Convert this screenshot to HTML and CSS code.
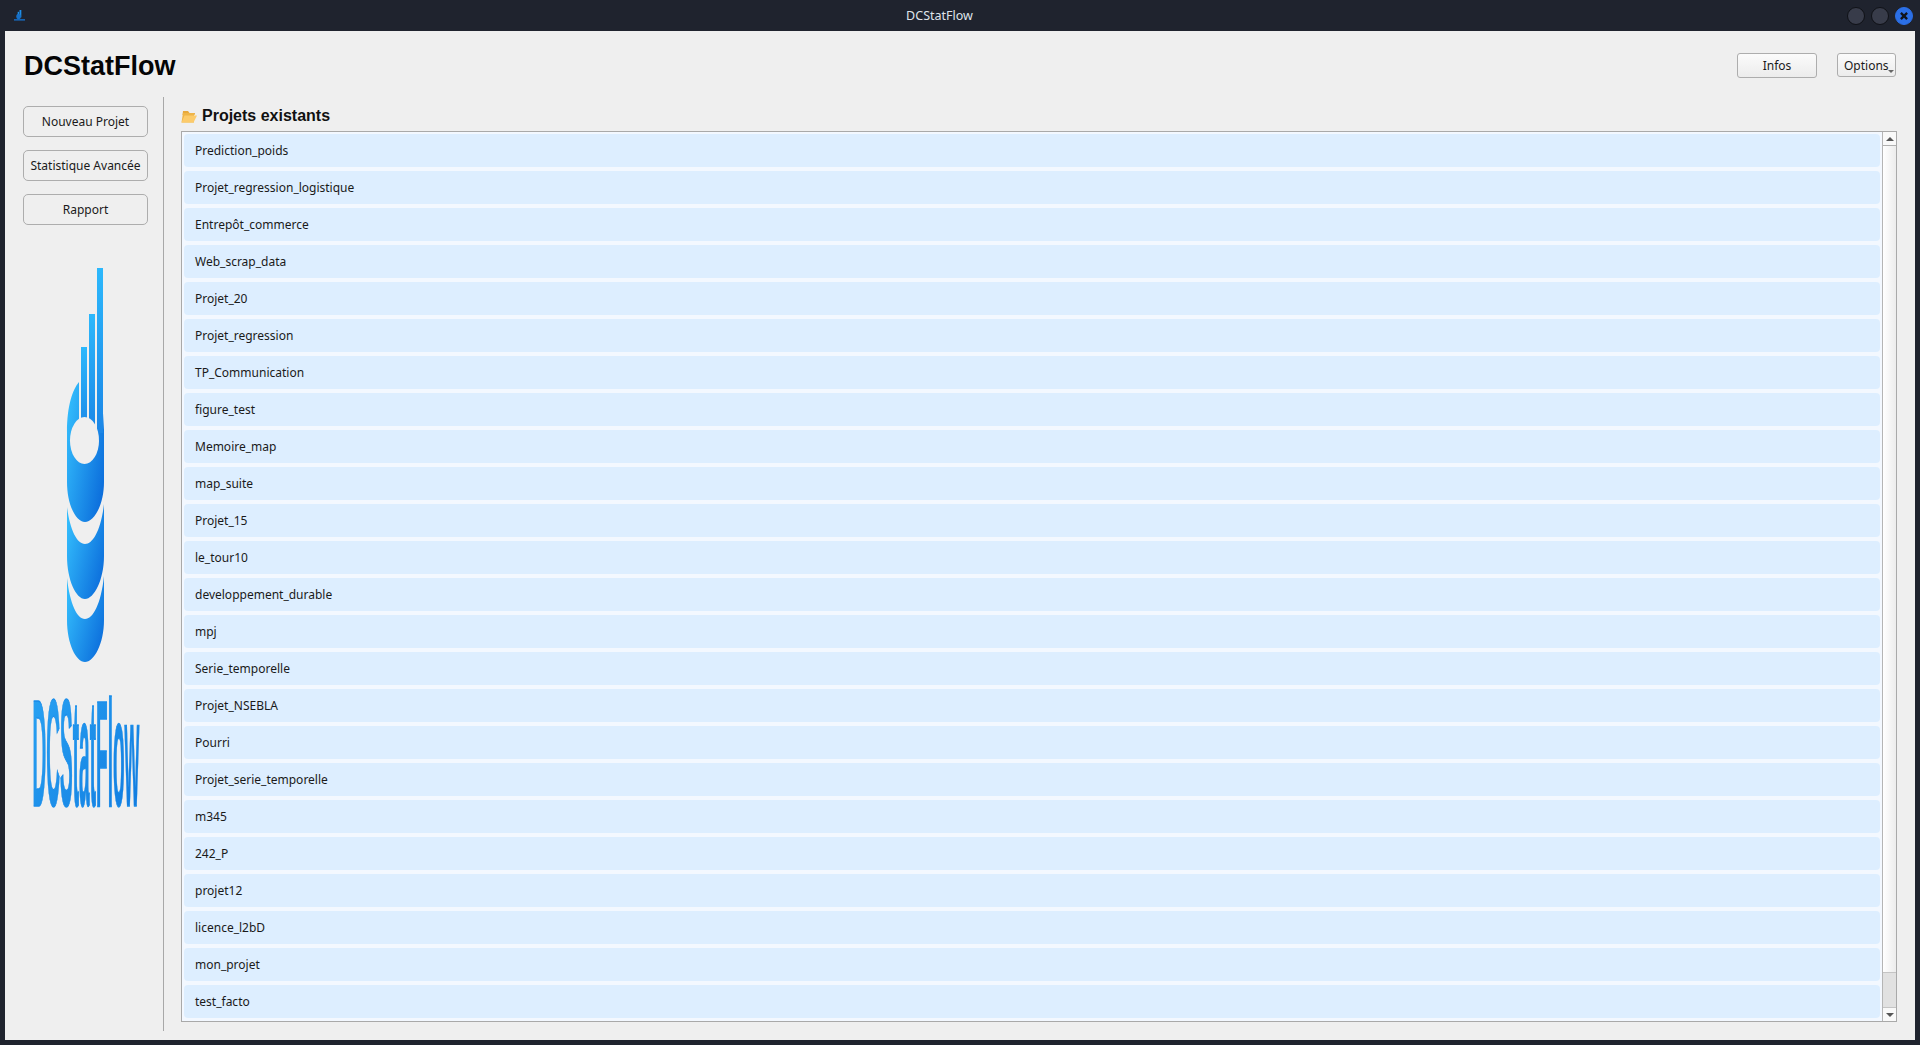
FILE: index.html
```html
<!DOCTYPE html>
<html lang="fr">
<head>
    <meta charset="UTF-8">
    <title>DCStatFlow</title>
    <link rel="stylesheet" href="styles.css">
</head>
<body>
    <div class="titlebar">
        <svg class="app-icon" viewBox="0 0 14 12">
            <rect x="7" y="0" width="2" height="8" fill="#1f8fe8"/>
            <rect x="5" y="2" width="1.5" height="6" fill="#1f8fe8"/>
            <ellipse cx="6" cy="7" rx="2.5" ry="3" fill="#1670c8"/>
            <rect x="1" y="10" width="12" height="1.5" fill="#1670c8"/>
        </svg>
        <span class="titlebar-name">DCStatFlow</span>
        <div class="win-buttons">
            <span class="win-btn"></span>
            <span class="win-btn"></span>
            <span class="win-btn win-close">
                <svg viewBox="0 0 18 18"><path d="M5.5 5.5 L12.5 12.5 M12.5 5.5 L5.5 12.5"/></svg>
            </span>
        </div>
    </div>

    <div class="window">
        <header class="top">
            <h1>DCStatFlow</h1>
            <div class="top-actions">
                <button class="btn btn-infos">Infos</button>
                <button class="btn btn-options">Options<span class="menu-arrow"></span></button>
            </div>
        </header>

        <div class="content">
            <aside class="sidebar">
                <button class="btn side-btn">Nouveau Projet</button>
                <button class="btn side-btn">Statistique Avancée</button>
                <button class="btn side-btn">Rapport</button>

                <svg class="logo-mark" viewBox="60 260 50 403">
                    <defs>
                        <linearGradient id="blueShape" x1="0" y1="0.2" x2="1" y2="0.8">
                            <stop offset="0" stop-color="#33bcfc"/>
                            <stop offset="1" stop-color="#0b6cdb"/>
                        </linearGradient>
                        <linearGradient id="blueBar" x1="0" y1="0" x2="0" y2="1">
                            <stop offset="0" stop-color="#2cb8fc"/>
                            <stop offset="1" stop-color="#1b86e6"/>
                        </linearGradient>
                    </defs>
                    <path class="shape" d="M79 382 C73 389 67 405 67 432 L67 482 C67 505 76 522 85 522 C94 522 104 505 104 482 L104 413 L103 430 L79 430 Z"/>
                    <rect class="bar" x="81" y="347" width="6" height="90"/>
                    <rect class="bar" x="89" y="314" width="6" height="120"/>
                    <rect class="bar" x="97" y="268" width="6" height="165"/>
                    <ellipse class="hole" cx="84.5" cy="440.5" rx="14.5" ry="23.5"/>
                    <path class="shape" d="M67 507 C70 530 77 544 85 544 C93 544 101 530 104 504 L104 556 C104 580 94 599 85 599 C76 599 67 580 67 556 Z"/>
                    <path class="shape" d="M67 578 C70 604 77 619 85 619 C93 619 101 604 104 576 L104 620 C104 644 94 662 85 662 C76 662 67 644 67 620 Z"/>
                </svg>

                <svg class="logo-text" viewBox="23 663 125 180">
                    <defs>
                        <linearGradient id="blueText" x1="0" y1="0" x2="1" y2="1">
                            <stop offset="0" stop-color="#2aa5f4"/>
                            <stop offset="1" stop-color="#0f78de"/>
                        </linearGradient>
                    </defs>
                    <text transform="translate(32.5 806) scale(0.1254 1)">DCStatFlow</text>
                </svg>
            </aside>

            <main class="projects">
                <h2 class="projects-head">
                    <svg class="folder" viewBox="0 0 16 13">
                        <path d="M2 1 H7 L8.5 3 H14 L13.5 5 H1.5 Z" fill="#e8a93c"/>
                        <path d="M0.5 12.5 L2 3 H13 L13 12.5 Z" fill="#efb548"/>
                        <path d="M0.5 12.5 L3.5 5.5 H16 L12.5 12.5 Z" fill="#fccb6b"/>
                    </svg>
                    Projets existants
                </h2>
                <div class="list-box">
                    <ul class="project-list">
                        <li>Prediction_poids</li>
                        <li>Projet_regression_logistique</li>
                        <li>Entrepôt_commerce</li>
                        <li>Web_scrap_data</li>
                        <li>Projet_20</li>
                        <li>Projet_regression</li>
                        <li>TP_Communication</li>
                        <li>figure_test</li>
                        <li>Memoire_map</li>
                        <li>map_suite</li>
                        <li>Projet_15</li>
                        <li>le_tour10</li>
                        <li>developpement_durable</li>
                        <li>mpj</li>
                        <li>Serie_temporelle</li>
                        <li>Projet_NSEBLA</li>
                        <li>Pourri</li>
                        <li>Projet_serie_temporelle</li>
                        <li>m345</li>
                        <li>242_P</li>
                        <li>projet12</li>
                        <li>licence_l2bD</li>
                        <li>mon_projet</li>
                        <li>test_facto</li>
                    </ul>
                    <div class="scrollbar">
                        <div class="scroll-btn"><span class="arrow-up"></span></div>
                        <div class="scroll-track"></div>
                        <div class="scroll-thumb"></div>
                        <div class="scroll-btn scroll-btn-down"><span class="arrow-down"></span></div>
                    </div>
                </div>
            </main>
        </div>
    </div>
</body>
</html>
```

FILE: styles.css
```css
*{
    box-sizing: border-box;
    padding: 0;
    margin: 0;
}
html, body{
    height: 100%;
    overflow: hidden;
}
body{
    background-color: #1f232e;
    font-family: "Noto Sans", sans-serif;
    font-size: 12px;
    color: #1a1a1a;
    display: flex;
    flex-direction: column;
}

/* title bar */
.titlebar{
    height: 31px;
    position: relative;
    display: flex;
    align-items: center;
    justify-content: center;
    color: #dfe3ea;
    font-size: 12.5px;
    padding-right: 41px;
    flex-shrink: 0;
}
.app-icon{
    position: absolute;
    left: 13px;
    top: 10px;
    width: 13px;
    height: 11px;
}
.win-buttons{
    position: absolute;
    right: 7px;
    top: 7px;
    display: flex;
    gap: 6px;
}
.win-btn{
    width: 18px;
    height: 18px;
    border-radius: 50%;
    background-color: #383c4a;
    border: 1px solid #0f1116;
}
.win-close{
    background-color: #2b6fe6;
    border-color: #2b6fe6;
}
.win-close svg{
    display: block;
    width: 16px;
    height: 16px;
}
.win-close path{
    stroke: #10131a;
    stroke-width: 2.6;
    fill: none;
}

/* window */
.window{
    flex: 1;
    margin: 0 5px 5px;
    background-color: #efefef;
    display: flex;
    flex-direction: column;
    padding: 0 18px 9px;
    min-height: 0;
}
.top{
    height: 66px;
    display: flex;
    justify-content: space-between;
    flex-shrink: 0;
}
h1{
    font-family: "Liberation Sans", Arial, sans-serif;
    font-size: 27px;
    font-weight: bold;
    color: #050505;
    line-height: 32px;
    margin-top: 19px;
    margin-left: 1px;
}
.top-actions{
    display: flex;
    gap: 20px;
    align-items: flex-start;
    padding-top: 22px;
    margin-right: 1px;
}
.btn{
    font-family: "Noto Sans", sans-serif;
    font-size: 12px;
    color: #1a1a1a;
    background: linear-gradient(#fbfbfb, #ececec);
    border: 1px solid #adadad;
    border-radius: 3px;
}
.btn-infos{
    width: 80px;
    height: 25px;
}
.btn-options{
    width: 59px;
    height: 24px;
    position: relative;
    text-align: left;
    padding-left: 6px;
}
.menu-arrow{
    position: absolute;
    right: 1px;
    bottom: 3px;
    border-left: 3px solid transparent;
    border-right: 3px solid transparent;
    border-top: 3px solid #666;
}

.content{
    flex: 1;
    display: flex;
    min-height: 0;
}

/* left column */
.sidebar{
    width: 141px;
    border-right: 1px solid #a8a8a8;
    padding-top: 9px;
    display: flex;
    flex-direction: column;
    flex-shrink: 0;
}
.side-btn{
    width: 125px;
    height: 31px;
    margin-bottom: 13px;
    background: #efefef;
    border-radius: 5px;
    flex-shrink: 0;
}
.logo-mark{
    width: 50px;
    height: 403px;
    margin-top: 22px;
    margin-left: 37px;
    flex-shrink: 0;
}
.shape{
    fill: url(#blueShape);
}
.bar{
    fill: url(#blueBar);
}
.hole{
    fill: #efefef;
}
.logo-text{
    width: 125px;
    height: 180px;
    flex-shrink: 0;
}
.logo-text text{
    font-family: "Liberation Sans", Arial, sans-serif;
    font-weight: bold;
    font-size: 152px;
    fill: url(#blueText);
    stroke: #1c8eea;
    stroke-width: 1.2;
    vector-effect: non-scaling-stroke;
}

/* project list */
.projects{
    flex: 1;
    padding: 0 0 9px 17px;
    display: flex;
    flex-direction: column;
    min-width: 0;
}
.projects-head{
    height: 34px;
    display: flex;
    align-items: center;
    gap: 5px;
    font-family: "Liberation Sans", Arial, sans-serif;
    font-size: 16px;
    font-weight: bold;
    color: #111;
    padding-top: 3px;
    flex-shrink: 0;
}
.folder{
    width: 16px;
    height: 13px;
    margin-top: 1px;
}
.list-box{
    flex: 1;
    display: flex;
    border: 1px solid #a9a9a9;
    background-color: #f3f8ff;
    min-height: 0;
}
.project-list{
    flex: 1;
    list-style: none;
    padding: 2px 2px 0;
    overflow: hidden;
}
.project-list li{
    height: 33px;
    line-height: 33px;
    margin-bottom: 4px;
    padding-left: 11px;
    background-color: #ddeeff;
    border-radius: 4px;
}
.scrollbar{
    width: 14px;
    display: flex;
    flex-direction: column;
    flex-shrink: 0;
    background-color: #f7f7f7;
    border-left: 1px solid #b5b5b5;
}
.scroll-btn{
    height: 14px;
    display: flex;
    align-items: center;
    justify-content: center;
    background-color: #f9f9f9;
    border-bottom: 1px solid #b0b0b0;
}
.scroll-btn-down{
    border-bottom: none;
    border-top: 1px solid #c4c4c4;
}
.arrow-up{
    border-left: 4px solid transparent;
    border-right: 4px solid transparent;
    border-bottom: 4px solid #555;
}
.arrow-down{
    border-left: 4px solid transparent;
    border-right: 4px solid transparent;
    border-top: 4px solid #555;
}
.scroll-track{
    flex: 1;
    background: linear-gradient(90deg, #ffffff, #ececec);
}
.scroll-thumb{
    height: 35px;
    background-color: #e1e1e1;
    border-top: 1px solid #c4c4c4;
}
```
